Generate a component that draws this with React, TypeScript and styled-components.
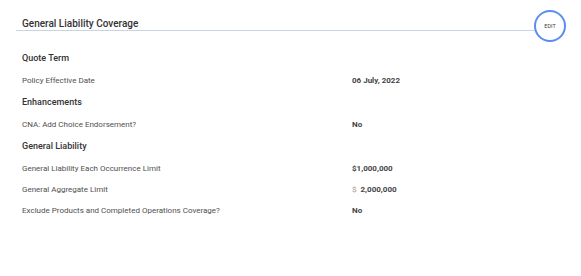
import React from "react";
import styled, { createGlobalStyle } from "styled-components";

const Global = createGlobalStyle`
  html, body { margin: 0; padding: 0; background: #fff; }
  body { font-family: Roboto, "Liberation Sans", sans-serif; color: #333; }
`;

const Card = styled.div`
  width: 581px;
  height: 276px;
  box-sizing: border-box;
  padding: 9px 15px 0 16px;
`;

const Header = styled.div`
  display: flex;
  align-items: center;
  height: 32px;
  position: relative;
`;

const HeaderBar = styled.div`
  flex: 1;
  align-self: stretch;
  display: flex;
  align-items: center;
  padding-left: 6px;
  border-bottom: 1px solid #c9d4e1;
  margin-bottom: 10px;
`;

const Title = styled.h2`
  margin: 0;
  margin-top: 8px;
  font-size: 10px;
  font-weight: 500;
  color: #333;
`;

const EditButton = styled.button`
  width: 32px;
  height: 32px;
  border-radius: 50%;
  border: 2px solid #5b8def;
  background: #fff;
  box-sizing: border-box;
  font-family: Roboto, "Liberation Sans", sans-serif;
  font-size: 5.5px;
  color: #444;
  padding: 0;
  margin-left: -7px;
  margin-top: 1px;
  cursor: pointer;
`;

const Body = styled.div`
  padding-left: 6px;
  margin-top: 6px;
`;

const Section = styled.h3`
  margin: 0;
  height: 22px;
  display: flex;
  align-items: center;
  font-size: 9px;
  font-weight: 500;
  color: #333;
`;

const Row = styled.div<{ $h?: number }>`
  display: grid;
  grid-template-columns: 330px 1fr;
  align-items: center;
  height: ${(p) => p.$h ?? 22}px;
  font-size: 8px;
`;

const Label = styled.span`
  color: #505050;
`;

const Value = styled.span`
  font-weight: 700;
  color: #444;
  font-size: 8px;
`;

const Currency = styled.span`
  font-weight: 400;
  color: #999;
  margin-right: 4px;
  font-size: 8px;
`;

export default function App() {
  return (
    <>
      <Global />
      <Card>
        <Header>
          <HeaderBar>
            <Title>General Liability Coverage</Title>
          </HeaderBar>
          <EditButton>EDIT</EditButton>
        </Header>
        <Body>
          <Section>Quote Term</Section>
          <Row>
            <Label>Policy Effective Date</Label>
            <Value>06 July, 2022</Value>
          </Row>
          <Section>Enhancements</Section>
          <Row>
            <Label>CNA: Add Choice Endorsement?</Label>
            <Value>No</Value>
          </Row>
          <Section>General Liability</Section>
          <Row>
            <Label>General Liability Each Occurrence Limit</Label>
            <Value>$1,000,000</Value>
          </Row>
          <Row $h={20}>
            <Label>General Aggregate Limit</Label>
            <Value>
              <Currency>$</Currency>2,000,000
            </Value>
          </Row>
          <Row>
            <Label>Exclude Products and Completed Operations Coverage?</Label>
            <Value>No</Value>
          </Row>
        </Body>
      </Card>
    </>
  );
}
